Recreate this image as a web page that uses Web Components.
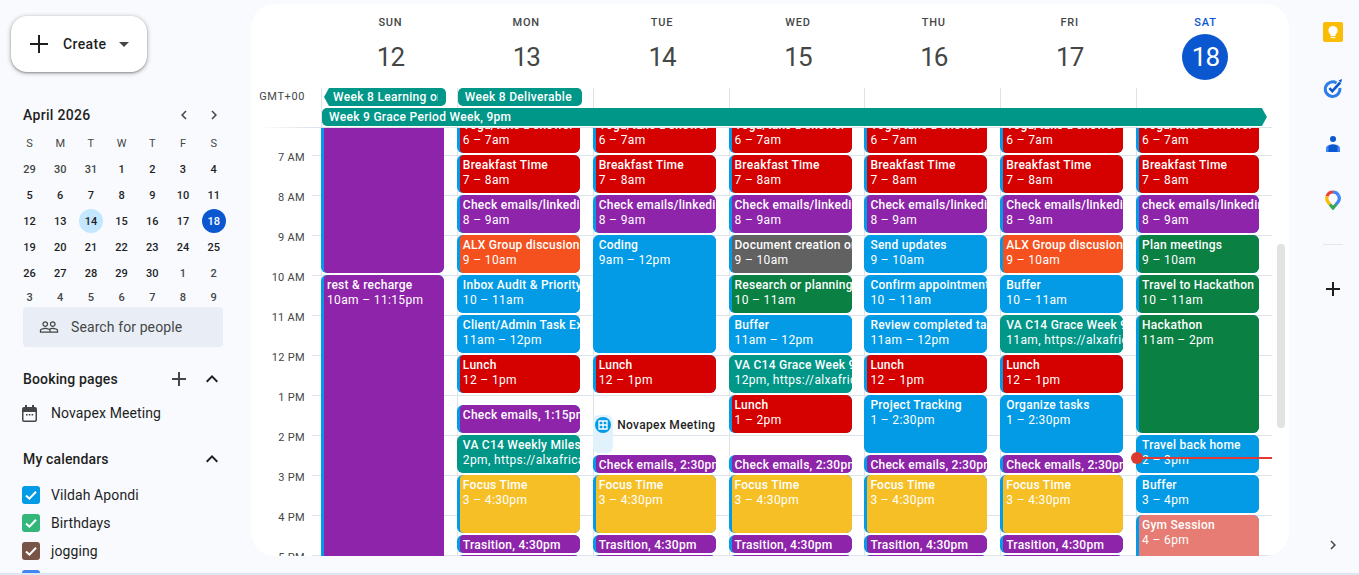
<!DOCTYPE html>
<html lang="en"><head><meta charset="utf-8"><title>Calendar</title>
<style>
html,body{margin:0;height:575px;overflow:hidden;background:#f8fafd;font-family:Roboto,"Liberation Sans",sans-serif;color:#1f1f1f}
</style></head><body>
<cal-app></cal-app>
<script>
const I={
 left:'M15.41 16.59L10.83 12l4.58-4.59L14 6l-6 6 6 6z',
 right:'M8.59 16.59L13.17 12 8.59 7.41 10 6l6 6-6 6z',
 up:'M7.41 15.41L12 10.83l4.59 4.58L18 14l-6-6-6 6z',
 people:'M16.5 13c-1.2 0-3.07.34-4.5 1-1.43-.67-3.3-1-4.5-1C5.33 13 1 14.08 1 16.25V19h22v-2.75c0-2.17-4.33-3.25-6.5-3.25zm-4 4.5h-10v-1.25c0-.54 2.56-1.75 5-1.75s5 1.21 5 1.75v1.25zm9 0H14v-1.25c0-.46-.2-.86-.52-1.22.88-.3 1.96-.53 3.02-.53 2.44 0 5 1.21 5 1.75v1.25zM7.5 12c1.93 0 3.5-1.57 3.5-3.5S9.43 5 7.5 5 4 6.57 4 8.5 5.57 12 7.5 12zm0-5.5c1.1 0 2 .9 2 2s-.9 2-2 2-2-.9-2-2 .9-2 2-2zm9 5.5c1.93 0 3.5-1.57 3.5-3.5S18.43 5 16.5 5 13 6.57 13 8.5s1.57 3.5 3.5 3.5zm0-5.5c1.1 0 2 .9 2 2s-.9 2-2 2-2-.9-2-2 .9-2 2-2z'
};
const icon=(d,s,c)=>`<svg width="${s}" height="${s}" viewBox="0 0 24 24" fill="${c}" style="display:block"><path d="${d}"/></svg>`;
const plus=(s,c,w)=>`<svg width="${s}" height="${s}" viewBox="0 0 ${s} ${s}" style="display:block"><path d="M${s/2} 0V${s}M0 ${s/2}H${s}" stroke="${c}" stroke-width="${w}" fill="none"/></svg>`;
const MED=480;

class CalApp extends HTMLElement{constructor(){super();this.attachShadow({mode:'open'}).innerHTML=`
<style>:host{display:block;height:575px}
.m{display:grid;grid-template-columns:251px 1038px 70px;height:573px;overflow:hidden}
.s{height:2px;background:#dde6f3}</style>
<div class="m"><cal-sidebar></cal-sidebar><cal-week></cal-week><cal-rail></cal-rail></div><div class="s"></div>`}}

class CalSidebar extends HTMLElement{constructor(){super();this.attachShadow({mode:'open'}).innerHTML=`
<style>:host{display:block;height:573px;overflow:hidden;padding-top:16px;box-sizing:border-box}
.create{display:flex;align-items:center;box-sizing:border-box;width:136px;height:56px;margin-left:11px;border-radius:16px;background:#fff;box-shadow:0 1px 2px rgba(0,0,0,.3),0 1px 4px 1px rgba(0,0,0,.2);padding-left:19px;font-size:14px;font-weight:${MED};letter-spacing:.35px}
.create span{margin:0 13px 0 15px}
mini-calendar{margin-top:33px}
.search{display:flex;align-items:center;box-sizing:border-box;height:40px;width:200px;margin-left:23px;background:#e9eef6;border-radius:4px;padding:0 0 1px 16px;font-size:14px;color:#444746;gap:12px;letter-spacing:.1px}
.head{display:flex;align-items:center;height:24px;margin-left:23px;width:201px;font-size:14px;font-weight:${MED};letter-spacing:.15px}
.head b{font-weight:${MED};flex:1}
.booking{margin-top:20px}
.head i{display:block;margin-right:14px;color:#444746}
.item{display:flex;align-items:center;height:28px;font-size:14px;margin-left:22px;gap:11px;letter-spacing:.1px}
.nov{margin-top:8px;gap:14px}
.my{margin-top:20px}
.list{margin-top:10px}
</style>
<div class="create">${plus(18,'#1f1f1f',2)}<span>Create</span><svg width="10" height="5" viewBox="0 0 10 5"><path d="M0 0h10L5 5z" fill="#444746"/></svg></div>
<mini-calendar></mini-calendar>
<div class="search">${icon(I.people,20,'#444746')}<span>Search for people</span></div>
<div class="head booking"><b>Booking pages</b><i>${plus(14,'#444746',2)}</i><span>${icon(I.up,24,'#1f1f1f')}</span></div>
<div class="item nov"><svg width="15" height="17" viewBox="0 0 15 17" style="flex:none"><path d="M3 0h2v2h5V0h2v2h1a2 2 0 0 1 2 2v11a2 2 0 0 1-2 2H2a2 2 0 0 1-2-2V4a2 2 0 0 1 2-2h1zM1.500 7v8c0 .3.2.5.5.5h11c.3 0 .5-.2.5-.5V7zM4 9h1.600v1.600H4zM6.800 9h1.600v1.600H6.800zM9.600 9h1.600v1.600H9.600z" fill="#444746" fill-rule="evenodd"/></svg><span>Novapex Meeting</span></div>
<div class="head my"><b>My calendars</b><span>${icon(I.up,24,'#1f1f1f')}</span></div>
<div class="list">
<cal-check color="#039be5">Vildah Apondi</cal-check>
<cal-check color="#33b679">Birthdays</cal-check>
<cal-check color="#795548">jogging</cal-check>
<cal-check color="#4285f4"></cal-check>
</div>`}}

class CalCheck extends HTMLElement{connectedCallback(){if(this.shadowRoot)return;this.attachShadow({mode:'open'}).innerHTML=`
<style>:host{display:flex;align-items:center;height:28px;margin-left:22px;gap:11px;font-size:14px;letter-spacing:.1px}
.box{width:18px;height:18px;border-radius:3px;flex:none;background:${this.getAttribute('color')}}svg{display:block}</style>
<div class="box"><svg width="18" height="18" viewBox="0 0 18 18"><path d="M4 9.500l3.400 3.200L14 5.800" stroke="#fff" stroke-width="2" fill="none"/></svg></div><slot></slot>`}}

class MiniCalendar extends HTMLElement{constructor(){super();
 const heads='SMTWTFS'.split('').map(x=>`<span class="h">${x}</span>`).join('');
 const prev=[29,30,31],days=[];
 prev.forEach(d=>days.push([d,'o']));
 for(let d=1;d<=30;d++)days.push([d,'']);
 for(let d=1;d<=9;d++)days.push([d,'o']);
 const cells=days.map(([d,c],i)=>{let k=c;if(i>=3&&d==14)k='today';if(i>=3&&i<33&&d==18)k='sel';return `<span class="${k}"><em>${d}</em></span>`}).join('');
 this.attachShadow({mode:'open'}).innerHTML=`
<style>:host{display:block}
.t{display:flex;align-items:center;height:20px;margin-left:23px;font-size:14px;letter-spacing:.3px}
.t b{font-weight:${MED};flex:1}
.t i{display:block;margin-right:12px}
.t i+i{margin-right:28px}
.g{display:grid;grid-template-columns:repeat(7,30.7px);grid-template-rows:repeat(6,26px) 21px;margin:5px 0 0 14.2px;font-size:11px;font-weight:500;color:#1f1f1f}
.g span{display:flex;align-items:center;justify-content:center}
.g em{font-style:normal;display:flex;align-items:center;justify-content:center;width:24px;height:24px;border-radius:50%}
.g .h,.g .o{color:#444746}
.g .h{font-weight:400}
.g .today em{background:#c2e7ff}
.g .sel em{background:#0b57d0;color:#fff}
.g span:nth-last-child(-n+7){align-items:flex-start;line-height:0}
.g span:nth-last-child(-n+7) em{height:26px;margin-top:-1px}
</style>
<div class="t"><b>April 2026</b><i>${icon(I.left,18,'#444746')}</i><i>${icon(I.right,18,'#444746')}</i></div>
<div class="g">${heads}${cells}</div>`}}

class CalEvent extends HTMLElement{connectedCallback(){if(this.shadowRoot)return;
 const a=n=>this.getAttribute(n);
 this.style.gridRow=`${a('start')} / span ${a('span')}`;
 const c=a('bg');const bar=a('bar')||'#039be5';
 const time=a('time');
 this.attachShadow({mode:'open'}).innerHTML=`
<style>:host{display:block;min-width:0;margin:0 12.8px 2px 0;border-radius:6px;overflow:hidden;background:${bar}}
.b{box-sizing:border-box;height:100%;margin-left:3px;padding:3px 0 0 3px;background:${c};border-radius:4px;color:#fff;font-size:12px;line-height:15px;white-space:nowrap;overflow:hidden}
.n{font-weight:${MED};letter-spacing:.25px}.d{letter-spacing:.35px}</style>
<div class="b"><div class="n"><slot></slot></div>${time?`<div class="d">${time}</div>`:''}</div>`}}

class CalBooking extends HTMLElement{connectedCallback(){if(this.shadowRoot)return;
 this.style.gridRow=`${this.getAttribute('start')} / span ${this.getAttribute('span')}`;
 this.attachShadow({mode:'open'}).innerHTML=`
<style>:host{display:flex;min-width:0;margin:0 12.8px 2px 0;gap:4.5px}
.p{flex:none;width:20px;background:#e1f2fc;border-radius:6px;padding:2px 0 0 2px;box-sizing:border-box}
svg{display:block}
.n{font-size:12px;font-weight:${MED};line-height:15px;color:#1f1f1f;margin-top:3px;letter-spacing:.3px;white-space:nowrap;background:#fff;height:15px}</style>
<div class="p"><svg width="16" height="16" viewBox="0 0 16 16"><circle cx="8" cy="8" r="8" fill="#039be5"/><path d="M4 4h8v8H4zM8 4v8M4 8h8" stroke="#fff" stroke-width="1.300" fill="none"/></svg></div><div class="n"><slot></slot></div>`}}

class CalChip extends HTMLElement{connectedCallback(){if(this.shadowRoot)return;
 const d=this.getAttribute('dir');
 const lt=d=='left',rt=d=='right';
 this.attachShadow({mode:'open'}).innerHTML=`
<style>:host{display:flex;height:18px;min-width:0}
.tip{flex:none;width:5px;background:#009688}
.l{clip-path:polygon(100% 0,0 50%,100% 100%)}.r{clip-path:polygon(0 0,100% 50%,0 100%)}
.b{flex:1;min-width:0;box-sizing:border-box;background:#009688;color:#fff;font-size:12px;font-weight:${MED};letter-spacing:.3px;line-height:18px;white-space:nowrap;border-radius:${lt?'0 5px 5px 0':rt?'5px 0 0 5px':'5px'};padding:0 8px 0 ${lt?4:rt?7.5:7}px}
.c{overflow:hidden}</style>
${lt?'<div class="tip l"></div>':''}<div class="b"><div class="c"><slot></slot></div></div>${rt?'<div class="tip r"></div>':''}`}}

const R='#d50000',P='#8e24aa',O='#f4511e',B='#039be5',T='#009688',Y='#f6bf26',G='#0b8043',K='#616161',F='#e67c73';
const CE='Check emails/linkedin';
const am=[['Yoga/take a shower','6 – 7am',1,4,R],['Breakfast Time','7 – 8am',5,4,R]];
const chk=[[CE,'8 – 9am',9,4,P]];
const lunch=[['Lunch','12 – 1pm',25,4,R]];
const eve=[['Check emails, 2:30pm','',35,2,P],['Focus Time','3 – 4:30pm',37,6,Y],['Trasition, 4:30pm','',43,2,P],['','',45,8,P]];
const DAYS=[
 {n:'SUN',d:12,ev:[['','',1,16,P],['rest & recharge','10am – 11:15pm',17,60,P]]},
 {n:'MON',d:13,ev:[...am,...chk,['ALX Group discusion','9 – 10am',13,4,O],['Inbox Audit & Priority Setting','10 – 11am',17,4,B],['Client/Admin Task Execution','11am – 12pm',21,4,B],...lunch,['Check emails, 1:15pm','',30,3,P],['VA C14 Weekly Milestone','2pm, https://alxafrica.zoom.us',33,4,T,T],['Focus Time','3 – 4:30pm',37,6,Y],['Trasition, 4:30pm','',43,2,P],['','',45,8,P]]},
 {n:'TUE',d:14,ev:[...am,...chk,['Coding','9am – 12pm',13,12,B],...lunch,{book:'Novapex Meeting',s:31,c:4},...eve]},
 {n:'WED',d:15,ev:[...am,...chk,['Document creation or review','9 – 10am',13,4,K],['Research or planning','10 – 11am',17,4,G],['Buffer','11am – 12pm',21,4,B],['VA C14 Grace Week 9','12pm, https://alxafrica.zoom.us',25,4,T,T],['Lunch','1 – 2pm',29,4,R],...eve]},
 {n:'THU',d:16,ev:[...am,...chk,['Send updates','9 – 10am',13,4,B],['Confirm appointments','10 – 11am',17,4,B],['Review completed tasks','11am – 12pm',21,4,B],...lunch,['Project Tracking','1 – 2:30pm',29,6,B],...eve]},
 {n:'FRI',d:17,ev:[...am,...chk,['ALX Group discusion','9 – 10am',13,4,O],['Buffer','10 – 11am',17,4,B],['VA C14 Grace Week 9','11am, https://alxafrica.zoom.us',21,4,T,T],...lunch,['Organize tasks','1 – 2:30pm',29,6,B],...eve]},
 {n:'SAT',d:18,now:1,ev:[...am,['check emails/linkedin','8 – 9am',9,4,P],['Plan meetings','9 – 10am',13,4,G],['Travel to Hackathon','10 – 11am',17,4,G],['Hackathon','11am – 2pm',21,12,G],['Travel back home','2 – 3pm',33,4,B],['Buffer','3 – 4pm',37,4,B],['Gym Session','4 – 6pm',41,8,F]]}
];
const esc=s=>s.replace(/&/g,'&amp;');
const HOURS=['7 AM','8 AM','9 AM','10 AM','11 AM','12 PM','1 PM','2 PM','3 PM','4 PM','5 PM'];

class CalWeek extends HTMLElement{constructor(){super();
 const heads=DAYS.map(d=>`<div class="dh${d.now?' cur':''}"><span class="nm">${d.n}</span><span class="num">${d.d}</span></div>`).join('');
 const cols=DAYS.map(d=>`<div class="day">${d.ev.map(e=>e.book?`<cal-booking start="${e.s}" span="${e.c}">${e.book}</cal-booking>`:`<cal-event bg="${e[4]}" bar="${e[5]||B}" start="${e[2]}" span="${e[3]}" time="${e[1]}">${esc(e[0])}</cal-event>`).join('')}${d.now?'<div class="now"></div>':''}</div>`).join('');
 this.attachShadow({mode:'open'}).innerHTML=`
<style>:host{display:flex;flex-direction:column;height:552px;margin-top:4px;background:#fff;border-radius:24px;overflow:hidden;position:relative}
.hd{display:grid;grid-template-columns:70px repeat(7,135.857px);height:84px;flex:none}
.dh{display:flex;flex-direction:column;align-items:center;padding-left:3px;color:#444746}
.nm{font-size:11px;font-weight:${MED};letter-spacing:.8px;line-height:14px;margin-top:12px}
.num{font-size:26px;line-height:46px;width:46px;height:46px;text-align:center;border-radius:50%;margin-top:4px;color:#444746;letter-spacing:-1px}
.cur .nm{color:#0b57d0}.cur .num{background:#0b57d0;color:#fff}
.ad{display:grid;grid-template-columns:70px 951px;height:40px;flex:none;background:linear-gradient(to right,transparent 7px,#dde3ea 60px,#dde3ea 1021px,transparent 1021px) left bottom/100% 1px no-repeat}
.gmt{font-size:11px;line-height:14px;color:#444746;text-align:right;padding:2px 16px 0 0;letter-spacing:.6px}
.chips{display:grid;grid-template-columns:repeat(7,135.857px);grid-template-rows:18px 18px;row-gap:2px;align-content:start;background:repeating-linear-gradient(to right,#dde3ea 0 1px,transparent 1px 135.857px)}
.c1{margin:0 10.9px 0 3px}.c2{margin:0 10.700px 0 1px}.c3{grid-column:1 / span 7;margin:0 5px 0 .5px}
.sc{flex:1;min-height:0;overflow:hidden}
.body{display:grid;grid-template-columns:70px repeat(7,135.857px) 1fr;margin-top:-13px;height:640px;background:linear-gradient(to bottom,#dde3ea 0 1px,transparent 1px) 61px 40px/960px 40px repeat-y}
.gut{padding-top:36px}
.gut div{height:40px;font-size:11px;line-height:14px;color:#444746;text-align:right;padding-right:16px;letter-spacing:.3px}
.day{display:grid;grid-template-columns:minmax(0,1fr);grid-template-rows:repeat(64,10px);background:linear-gradient(#dde3ea,#dde3ea) left top/1px 100% no-repeat;position:relative;min-width:0}
.now{position:absolute;left:1px;top:342px;width:135px;height:2px;background:#e53935}
.now::before{content:"";position:absolute;left:-6px;top:-5px;width:12px;height:12px;border-radius:50%;background:#dc3a30}
.bar{width:8px;height:184px;margin:129px 0 0 5px;background:#e2e2e2;border-radius:4px}
</style>
<div class="hd"><div></div>${heads}</div>
<div class="ad"><div class="gmt">GMT+00</div><div class="chips">
<cal-chip dir="left" class="c1">Week 8 Learning on the go</cal-chip><cal-chip class="c2">Week 8 Deliverable</cal-chip>
<cal-chip dir="right" class="c3">Week 9 Grace Period Week, 9pm</cal-chip></div></div>
<div class="sc"><div class="body"><div class="gut">${HOURS.map(h=>`<div>${h}</div>`).join('')}</div>${cols}<div><div class="bar"></div></div></div></div>`}}

class CalRail extends HTMLElement{constructor(){super();this.attachShadow({mode:'open'}).innerHTML=`
<style>:host{display:flex;flex-direction:column;align-items:center;height:573px;padding:22px 0 19px 18px;box-sizing:border-box;gap:36px}
svg{display:block}
hr{width:20px;height:1px;border:0;background:#e3e7ec;margin:-2px 0 -1px}
.pl{margin-top:2px}
.ch{margin-top:auto}
</style>
<svg width="20" height="20" viewBox="0 0 20 20"><rect width="20" height="20" rx="2" fill="#fbbc04"/><circle cx="10" cy="8.600" r="4.600" fill="#fff"/><rect x="7.500" y="12" width="5" height="2" fill="#fff"/><rect x="7.700" y="14.800" width="4.600" height="1.400" fill="#fff"/></svg>
<svg width="20" height="20" viewBox="0 0 20 20"><path d="M13.500 4A7.300 7.300 0 1 0 16.800 9" stroke="#2f7de8" stroke-width="3" fill="none" transform="translate(0 1)"/><path d="M6.400 10.200l2.900 2.900L17.200 4.500" stroke="#0b57d0" stroke-width="2.600" fill="none"/><path d="M15.500 2.400L19 1l-.8 3.800z" fill="#0b57d0"/></svg>
<svg width="20" height="20" viewBox="0 0 20 20"><circle cx="10" cy="5" r="3" fill="#0b57d0"/><path d="M3 18v-3.500C3 12 5.500 10.500 10 10.500s7 1.500 7 4V18z" fill="#4285f4"/><path d="M5.500 18v-5.500C6.500 11 8 10.500 10 10.500s3.500.5 4.500 2V18z" fill="#0b57d0"/></svg>
<svg width="20" height="20" viewBox="0 0 20 20" fill="none"><path d="M10 19.500L5.200 13.200l4.800 3 4.800-3z" fill="#34a853"/><path d="M10 2a6.200 6.200 0 0 0-5.900 4.300" stroke="#ea4335" stroke-width="3.200"/><path d="M10 2a6.200 6.200 0 0 1 5.600 3.500" stroke="#4285f4" stroke-width="3.200"/><path d="M15.600 5.500a6.200 6.200 0 0 1-.6 6.500L13 14.500" stroke="#4285f4" stroke-width="3.200"/><path d="M4.100 6.300A6.200 6.200 0 0 0 5 12l2 2.500" stroke="#fbbc04" stroke-width="3.200"/><path d="M7 14.500L10 18l3-3.500" stroke="#34a853" stroke-width="3.200"/></svg>
<hr>
<div class="pl">${plus(14,'#1f1f1f',2)}</div>
<div class="ch">${icon(I.right,18,'#444746')}</div>`}}

[['cal-app',CalApp],['cal-sidebar',CalSidebar],['cal-check',CalCheck],['mini-calendar',MiniCalendar],['cal-event',CalEvent],['cal-booking',CalBooking],['cal-chip',CalChip],['cal-week',CalWeek],['cal-rail',CalRail]].forEach(([n,c])=>customElements.define(n,c));
</script>
</body></html>
